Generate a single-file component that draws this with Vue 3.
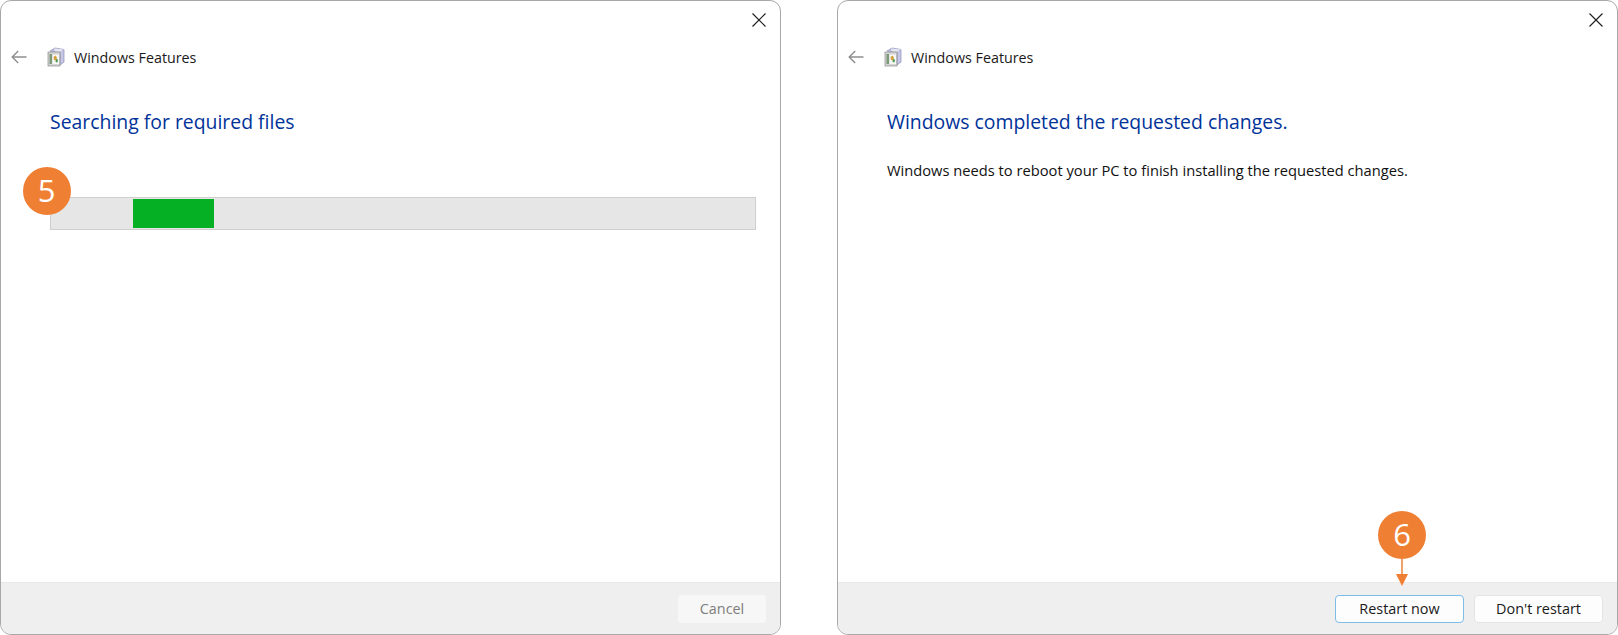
<script setup>
const windows = [
  { id: 'a', heading: 'Searching for required files', mode: 'progress' },
  { id: 'b', heading: 'Windows completed the requested changes.', mode: 'done' }
]
</script>

<template>
  <div class="page">
    <section v-for="w in windows" :key="w.id" class="win" :class="'win-' + w.id">
      <button class="close" aria-label="Close">
        <svg width="14" height="14" viewBox="0 0 14 14"><path d="M0.5 0.5L13.5 13.5M13.5 0.5L0.5 13.5" stroke="#222" stroke-width="1.2" fill="none"/></svg>
      </button>
      <header class="head">
        <svg class="back" width="16" height="14" viewBox="0 0 16 14"><path d="M15.5 7H1.2M7.2 1L1.2 7L7.2 13" stroke="#8f8f8f" stroke-width="1.4" fill="none"/></svg>
        <svg class="app" width="18" height="20" viewBox="0 0 18 20">
          <path d="M3 4L8 1L17 2.5V15L13 18V5.5Z" fill="#c6c8e6" stroke="#8a8db8" stroke-width="0.7"/>
          <path d="M7 1.5L7 4.5L13 5.5L17 2.5" fill="#e6e6f2" stroke="#a0a2c8" stroke-width="0.5"/>
          <rect x="1" y="5" width="12" height="14" fill="#d4d4d4" stroke="#8c8c8c" stroke-width="0.7"/>
          <rect x="2.5" y="7" width="2.5" height="10" fill="#7c9a78"/>
          <rect x="5.5" y="7.5" width="6.5" height="9.5" fill="#f7f7f7"/>
          <path d="M6.5 10l2-1.5 1.5 2-1 3-2-.5z" fill="#d4a13d"/>
          <path d="M9 12l2 .5-.5 3-2-.5z" fill="#4f9a4f"/>
        </svg>
        <h2 class="title">Windows Features</h2>
      </header>
      <main class="body">
        <h1 class="heading">{{ w.heading }}</h1>
        <div v-if="w.mode === 'progress'" class="bar"><div class="fill"></div></div>
        <p v-else class="msg">Windows needs to reboot your PC to finish installing the requested changes.</p>
      </main>
      <footer class="foot">
        <template v-if="w.mode === 'progress'">
          <button class="btn cancel" disabled>Cancel</button>
        </template>
        <template v-else>
          <button class="btn primary">Restart now</button>
          <button class="btn second">Don't restart</button>
        </template>
      </footer>
      <div v-if="w.mode === 'progress'" class="badge badge5">5</div>
      <div v-else class="callout">
        <div class="badge">6</div>
        <div class="stem"></div>
        <div class="tip"></div>
      </div>
    </section>
  </div>
</template>

<style>
html, body { margin: 0; background: #fff; }
</style>

<style scoped>
.page {
  width: 1618px;
  height: 635px;
  display: flex;
  justify-content: space-between;
  font-family: "Open Sans", "Noto Sans", sans-serif;
  overflow: hidden;
}
.win {
  position: relative;
  width: 781px;
  height: 635px;
  box-sizing: border-box;
  border: 1.5px solid #a8a8a8;
  border-radius: 11px;
  display: flex;
  flex-direction: column;
  background: #fff;
  overflow: hidden;
}
.close {
  position: absolute;
  top: 12px;
  right: 14px;
  padding: 0;
  border: 0;
  background: none;
  line-height: 0;
}
.head {
  display: flex;
  align-items: center;
  height: 26px;
  margin-top: 43px;
  padding-left: 10px;
}
.back { margin-right: 20px; }
.app { margin-right: 9px; }
.title {
  margin: 0;
  font-size: 14.3px;
  font-weight: 400;
  color: #1a1a1a;
}
.body {
  flex: 1;
  padding: 0 24px 0 49px;
}
.heading {
  margin: 38px 0 0;
  font-size: 19.4px;
  line-height: 28px;
  font-weight: 400;
  color: #003399;
}
.bar {
  margin-top: 61px;
  height: 33px;
  box-sizing: border-box;
  border: 1px solid #cfcfcf;
  background: #e6e6e6;
  padding: 1px 0 1px 82px;
}
.fill {
  width: 81px;
  height: 100%;
  background: #06b025;
}
.msg {
  margin: 24px 0 0;
  font-size: 14.7px;
  line-height: 20px;
  color: #111;
}
.foot {
  height: 52px;
  flex: none;
  box-sizing: border-box;
  background: #efefef;
  border-top: 1px solid #e8e8e8;
  display: flex;
  justify-content: flex-end;
  align-items: center;
  gap: 10px;
  padding: 0 14px 0 0;
}
.btn {
  height: 28px;
  box-sizing: border-box;
  border-radius: 4px;
  font: inherit;
  font-size: 14.4px;
  padding: 0;
}
.cancel {
  width: 88px;
  border: 0;
  background: #f7f7f7;
  color: #7d7d7d;
}
.primary {
  width: 129px;
  border: 1px solid #7fbce8;
  background: #fdfdfd;
  color: #1a1a1a;
}
.second {
  width: 129px;
  border: 1px solid #e4e4e4;
  background: #fdfdfd;
  color: #1a1a1a;
}
.badge {
  width: 48px;
  height: 48px;
  border-radius: 50%;
  background: #ef7f33;
  color: #fff;
  font-size: 31px;
  line-height: 47px;
  text-align: center;
}
.badge5 {
  position: absolute;
  left: 21.5px;
  top: 165.5px;
}
.callout {
  position: absolute;
  left: 540px;
  top: 510px;
  display: flex;
  flex-direction: column;
  align-items: center;
}
.stem {
  width: 2px;
  height: 15px;
  background: #f2a36c;
}
.tip {
  width: 0;
  height: 0;
  border-left: 6.5px solid transparent;
  border-right: 6.5px solid transparent;
  border-top: 12px solid #ef7f33;
}
</style>
